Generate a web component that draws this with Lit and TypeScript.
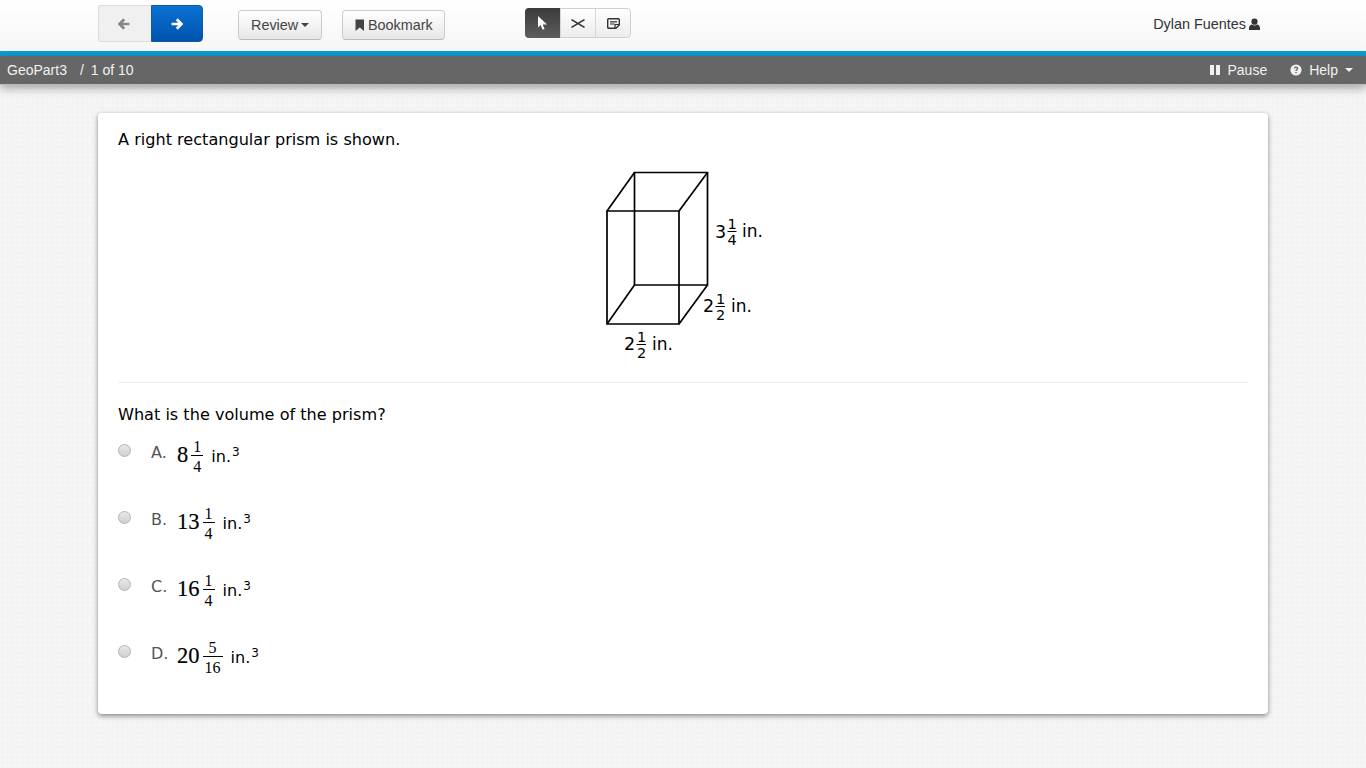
import { LitElement, css, html, svg } from "lit";
import { customElement } from "lit/decorators.js";

const options = [
  { letter: "A", whole: "8", top: "1", bottom: "4" },
  { letter: "B", whole: "13", top: "1", bottom: "4" },
  { letter: "C", whole: "16", top: "1", bottom: "4" },
  { letter: "D", whole: "20", top: "5", bottom: "16" },
];

const icon = (d: unknown, w = 14, h = 14, vb = "0 0 14 14") =>
  html`<svg class="icon" width=${w} height=${h} viewBox=${vb}>${d}</svg>`;

const arrowLeft = svg`<path d="M7.200 2.200 2.600 7l4.600 4.800M3 7h9.400" fill="none" stroke="currentColor" stroke-width="2.700"/>`;
const arrowRight = svg`<path d="M6.800 2.200 11.400 7l-4.600 4.800M11 7H1.600" fill="none" stroke="currentColor" stroke-width="2.700"/>`;
const bookmark = svg`<path d="M2.500 1.500h8.500v11.500L6.750 9.500 2.500 13z" fill="currentColor"/>`;
const user = svg`<circle cx="7" cy="4" r="3.400" fill="currentColor"/><path d="M1 13c-.4-3.800.9-5.600 3.300-6 .8.700 1.700 1 2.700 1s1.900-.3 2.700-1c2.400.4 3.700 2.200 3.300 6z" fill="currentColor"/>`;
const pause = svg`<path d="M0 0h4v10H0zM6 0h4v10H6z" fill="currentColor"/>`;
const help = svg`<circle cx="6" cy="6" r="5.600" fill="currentColor"/><path d="M3.800 4.500c.2-1.400 1.100-2 2.300-2s2.200.8 2.200 1.900c0 1.500-1.700 1.400-1.700 2.700H5.300c0-2 1.500-1.900 1.500-2.700 0-.4-.3-.7-.8-.7s-.8.3-1 .9zM5.300 7.900h1.400v1.400H5.300z" fill="#666"/>`;
const pointer = svg`<path d="M0 0v11.500l2.600-2.400 2 4.700 2-.9-2-4.400H9z" fill="currentColor"/>`;
const cross = svg`<path d="M.5.600 13.500 8.400M.5 8.400 13.500.600" fill="none" stroke="currentColor" stroke-width="1.500"/>`;
const note = svg`<path d="M.7 1.700a1 1 0 0 1 1-1h9.600a1 1 0 0 1 1 1v5.200l-3.400 3.400H1.700a1 1 0 0 1-1-1z" fill="none" stroke="currentColor" stroke-width="1.400"/><path d="M3 3.800h7M3 6h4.500" stroke="currentColor" stroke-width="1.200"/><path d="M8 10V6.500h4" fill="none" stroke="currentColor" stroke-width="1.200"/>`;

@customElement("app-root")
export class AppRoot extends LitElement {
  static styles = css`
    :host {
      display: block;
      min-height: 768px;
      background-color: #f5f5f5;
      background-image: radial-gradient(#f1f1f1 1px, transparent 1.2px);
      background-size: 5px 5px;
      font-family: "Liberation Sans", Arial, sans-serif;
      color: #333;
      overflow: hidden;
    }

    .icon {
      display: block;
      flex: none;
    }

    .topbar {
      display: flex;
      align-items: flex-start;
      height: 51px;
      padding: 0 106px 0 98px;
      background: linear-gradient(#fff, #f6f6f6);
    }

    .nav {
      display: flex;
      margin-top: 5px;
    }

    .nav-btn {
      display: flex;
      align-items: center;
      justify-content: center;
      box-sizing: border-box;
      height: 37px;
    }

    .prev {
      width: 53px;
      padding-right: 2px;
      color: #888;
      background: #f0f0f0;
      border: 1px solid #dcdcdc;
      border-right: 0;
      border-radius: 3px 0 0 3px;
    }

    .next {
      width: 52px;
      color: #fff;
      background: linear-gradient(#0a72d4, #0052ac);
      border: 1px solid #0a5aa8;
      border-radius: 0 4px 4px 0;
    }

    .btn {
      display: flex;
      align-items: center;
      box-sizing: border-box;
      height: 30px;
      margin-top: 10px;
      font-size: 14.4px;
      color: #444;
      background: linear-gradient(#fff, #e7e7e7);
      border: 1px solid #ccc;
      border-bottom-color: #b9b9b9;
      border-radius: 4px;
    }

    .review {
      width: 84px;
      margin-left: 35px;
      padding-left: 12px;
    }

    .caret {
      width: 0;
      height: 0;
      margin-left: 3px;
      border: 4px solid transparent;
      border-top-color: currentColor;
      border-bottom: 0;
    }

    .bookmark {
      width: 103px;
      margin-left: 20px;
      padding-left: 12px;
      gap: 3px;
    }

    .tools {
      display: flex;
      box-sizing: border-box;
      width: 106px;
      height: 30px;
      margin: 8px 0 0 80px;
      border: 1px solid #d0d0d0;
      border-radius: 4px;
      background: linear-gradient(#fff, #ececec);
    }

    .tool {
      display: flex;
      align-items: center;
      justify-content: center;
      box-sizing: border-box;
      width: 35px;
      color: #333;
    }

    .tool + .tool {
      border-left: 1px solid #d6d6d6;
    }

    .tool.active {
      margin: -1px 0 -1px -1px;
      color: #fff;
      background: linear-gradient(#3a3a3a, #5e5e5e);
      border-radius: 4px 0 0 4px;
    }

    .user {
      display: flex;
      align-items: center;
      gap: 3px;
      height: 15px;
      margin: 16px 0 0 auto;
      font-size: 14.4px;
    }

    .stripe {
      height: 5px;
      background: #0d9cd0;
    }

    .statusbar {
      position: relative;
      display: flex;
      align-items: center;
      height: 29px;
      padding: 0 13px 0 7px;
      font-size: 14px;
      color: #f2f2f2;
      background: #666;
      border-bottom: 1px solid #bbb;
      box-sizing: border-box;
      box-shadow: 0 3px 10px rgba(0, 0, 0, 0.35);
    }

    .slash {
      margin: 0 7px 0 13px;
    }

    .pause {
      display: flex;
      align-items: center;
      gap: 8px;
      margin-left: auto;
    }

    .help {
      display: flex;
      align-items: center;
      gap: 7px;
      margin-left: 23px;
    }

    .help .caret {
      margin-left: 0;
    }

    .card {
      box-sizing: border-box;
      width: 1170px;
      height: 601px;
      margin: 28px 0 0 98px;
      padding: 17px 20px 0;
      background: #fff;
      border-radius: 4px;
      box-shadow: 0 2px 5px rgba(0, 0, 0, 0.45);
      font-family: "DejaVu Sans", Verdana, sans-serif;
      font-size: 16.1px;
      color: #000;
    }

    .line {
      margin: 0;
      height: 20px;
      line-height: 20px;
    }

    .figure {
      display: block;
      margin: 10px auto 0;
    }

    .figure text {
      font-family: "DejaVu Sans", Verdana, sans-serif;
      fill: #000;
    }

    .rule {
      height: 1px;
      margin: 12px 0 22px;
      background: #eee;
    }

    .options {
      display: flex;
      flex-direction: column;
      margin-top: 19px;
    }

    .option {
      display: flex;
      align-items: flex-start;
      height: 67px;
    }

    .radio {
      box-sizing: border-box;
      width: 13px;
      height: 13px;
      margin: 0 20px 0 0;
      background: linear-gradient(#e8e8e8, #cfcfcf);
      border: 1px solid #b4b4b4;
      border-radius: 50%;
      flex: none;
    }

    .letter {
      width: 26px;
      line-height: 20px;
      margin-top: -1px;
      font-size: 16px;
      color: #555;
    }

    .math {
      display: flex;
      align-items: center;
      margin-top: -8px;
      height: 36px;
    }

    .whole {
      font-family: "Liberation Serif", serif;
      font-size: 22.5px;
      -webkit-text-stroke: 0.2px #000;
      margin-top: 2px;
    }

    .frac {
      display: flex;
      flex-direction: column;
      align-items: center;
      margin: 6px 0 0 2px;
      padding: 0 0 0 1px;
      font-family: "Liberation Serif", serif;
      font-size: 16px;
      line-height: 16px;
    }

    .frac span {
      box-sizing: border-box;
      padding: 0 2px;
    }

    .frac span:first-child {
      align-self: stretch;
      height: 17px;
      text-align: center;
      border-bottom: 1px solid #000;
    }

    .frac span:last-child {
      padding-top: 3px;
    }

    .unit {
      margin: 4px 0 0 8px;
    }

    .unit sup {
      font-size: 12px;
      line-height: 0;
      vertical-align: 6px;
      margin-left: 1px;
    }
  `;

  private figure() {
    return html`<svg class="figure" width="188" height="210" viewBox="589 160 188 210">
      <g fill="none" stroke="#000" stroke-width="1.700">
        <path d="M607 211h72v113h-72z" />
        <path d="M634.500 172.500h73v112.500h-73z" />
        <path d="M607 211l27.500-38.500M679 211l28.500-38.500M607 324l27.500-39M679 324l28.500-39" />
        <path d="M727.500 231.500h9M636.500 344.500h9.500M715.500 306.500h9.500" stroke-width="1" />
      </g>
      <text x="715" y="238" font-size="17.500">3</text>
      <text x="727.500" y="229" font-size="14.500">1</text>
      <text x="727.500" y="245" font-size="14.500">4</text>
      <text x="742" y="237" font-size="17">in.</text>
      <text x="703" y="312" font-size="17.500">2</text>
      <text x="716" y="304" font-size="14.500">1</text>
      <text x="716" y="320" font-size="14.500">2</text>
      <text x="731" y="312" font-size="17">in.</text>
      <text x="624" y="350" font-size="17.500">2</text>
      <text x="637" y="342" font-size="14.500">1</text>
      <text x="637" y="358" font-size="14.500">2</text>
      <text x="652" y="350" font-size="17">in.</text>
    </svg>`;
  }

  render() {
    return html`
      <div class="topbar">
        <div class="nav">
          <div class="nav-btn prev">${icon(arrowLeft)}</div>
          <div class="nav-btn next">${icon(arrowRight)}</div>
        </div>
        <div class="btn review">Review<span class="caret"></span></div>
        <div class="btn bookmark">${icon(bookmark, 10, 12, "2 1 10 12")}Bookmark</div>
        <div class="tools">
          <div class="tool active">${icon(pointer, 9, 14, "0 0 9 14")}</div>
          <div class="tool">${icon(cross, 14, 9, "0 0 14 9")}</div>
          <div class="tool">${icon(note, 13, 11, "0 0 13 11")}</div>
        </div>
        <div class="user">Dylan Fuentes ${icon(user, 11, 12, "1 0 12 13")}</div>
      </div>
      <div class="stripe"></div>
      <div class="statusbar">
        <span>GeoPart3</span><span class="slash">/</span><span>1 of 10</span>
        <div class="pause">${icon(pause, 10, 10, "0 0 10 10")}Pause</div>
        <div class="help">${icon(help, 12, 12, "0 0 12 12")}Help<span class="caret"></span></div>
      </div>
      <div class="card">
        <p class="line">A right rectangular prism is shown.</p>
        ${this.figure()}
        <div class="rule"></div>
        <p class="line">What is the volume of the prism?</p>
        <div class="options">
          ${options.map(
            (o) => html`<div class="option">
              <div class="radio"></div>
              <div class="letter">${o.letter}.</div>
              <div class="math">
                <span class="whole">${o.whole}</span>
                <span class="frac"><span>${o.top}</span><span>${o.bottom}</span></span>
                <span class="unit">in.<sup>3</sup></span>
              </div>
            </div>`
          )}
        </div>
      </div>
    `;
  }
}
